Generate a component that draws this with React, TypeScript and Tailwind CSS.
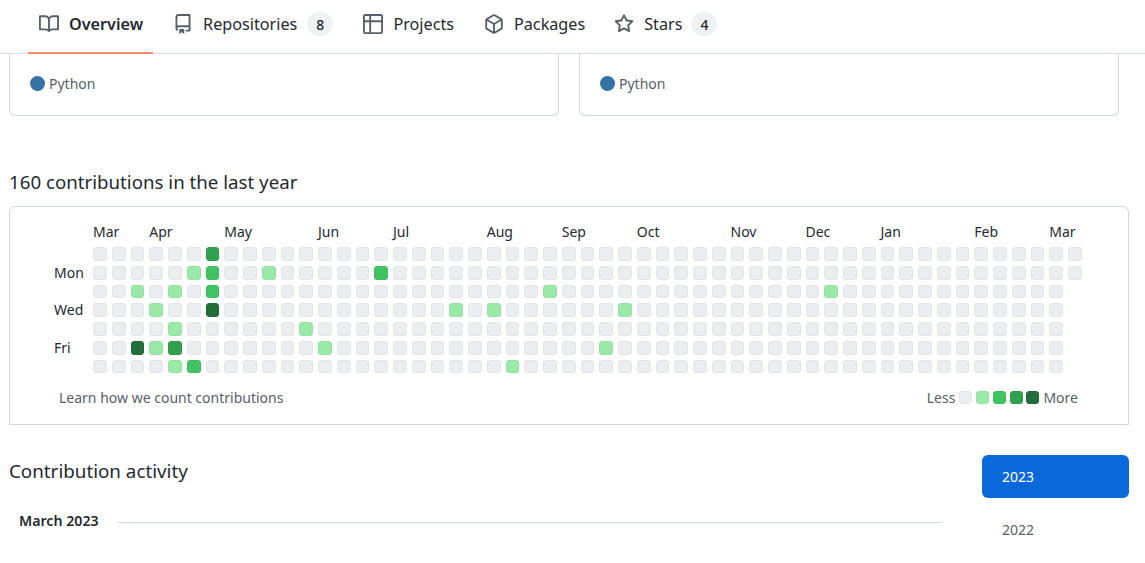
const FONT = "font-['Noto_Sans',sans-serif]";

const ICONS = {
  book: "M0 1.75A.75.75 0 0 1 .75 1h4.253c1.227 0 2.317.59 3 1.501A3.743 3.743 0 0 1 11.006 1h4.245a.75.75 0 0 1 .75.75v10.5a.75.75 0 0 1-.75.75h-4.507a2.25 2.25 0 0 0-1.591.659l-.622.621a.75.75 0 0 1-1.06 0l-.622-.621A2.25 2.25 0 0 0 5.258 13H.75a.75.75 0 0 1-.75-.75Zm7.251 10.324.004-5.073-.002-2.253A2.25 2.25 0 0 0 5.003 2.5H1.5v9h3.757a3.75 3.75 0 0 1 1.994.574ZM8.755 4.75l-.004 7.322a3.752 3.752 0 0 1 1.992-.572H14.5v-9h-3.495a2.25 2.25 0 0 0-2.25 2.25Z",
  repo: "M2 2.5A2.5 2.5 0 0 1 4.5 0h8.75a.75.75 0 0 1 .75.75v12.5a.75.75 0 0 1-.75.75h-2.5a.75.75 0 0 1 0-1.5h1.75v-2h-8a1 1 0 0 0-.714 1.7.75.75 0 1 1-1.072 1.05A2.495 2.495 0 0 1 2 11.5Zm10.5-1h-8a1 1 0 0 0-1 1v6.708A2.486 2.486 0 0 1 4.5 9h8ZM5 12.25a.25.25 0 0 1 .25-.25h3.5a.25.25 0 0 1 .25.25v3.25a.25.25 0 0 1-.4.2l-1.45-1.087a.249.249 0 0 0-.3 0L5.4 15.7a.25.25 0 0 1-.4-.2Z",
  table: "M0 1.75C0 .784.784 0 1.75 0h12.5C15.216 0 16 .784 16 1.75v12.5A1.75 1.75 0 0 1 14.25 16H1.75A1.75 1.75 0 0 1 0 14.25ZM6.5 6.5v8h7.75a.25.25 0 0 0 .25-.25V6.5Zm8-1.5V1.75a.25.25 0 0 0-.25-.25H6.5V5Zm-13 1.5v7.75c0 .138.112.25.25.25H5v-8ZM5 5V1.5H1.75a.25.25 0 0 0-.25.25V5Z",
  pkg: "m8.878.392 5.25 3.045c.54.314.872.89.872 1.514v6.098a1.75 1.75 0 0 1-.872 1.514l-5.25 3.045a1.75 1.75 0 0 1-1.756 0l-5.25-3.045A1.75 1.75 0 0 1 1 11.049V4.951c0-.624.332-1.201.872-1.514L7.122.392a1.75 1.75 0 0 1 1.756 0ZM7.875 1.69l-4.63 2.685L8 7.133l4.755-2.758-4.63-2.685a.248.248 0 0 0-.25 0ZM2.5 5.677v5.372c0 .09.047.171.125.216l4.625 2.683V8.432Zm6.25 8.271 4.625-2.683a.25.25 0 0 0 .125-.216V5.677L8.75 8.432Z",
  star: "M8 .25a.75.75 0 0 1 .673.418l1.882 3.815 4.21.612a.75.75 0 0 1 .416 1.279l-3.046 2.97.719 4.192a.751.751 0 0 1-1.088.791L8 12.347l-3.766 1.98a.75.75 0 0 1-1.088-.79l.72-4.194L.818 6.374a.75.75 0 0 1 .416-1.28l4.21-.611L7.327.668A.75.75 0 0 1 8 .25Zm0 2.445L6.615 5.5a.75.75 0 0 1-.564.41l-3.097.45 2.24 2.184a.75.75 0 0 1 .216.664l-.528 3.084 2.769-1.456a.75.75 0 0 1 .698 0l2.77 1.456-.53-3.084a.75.75 0 0 1 .216-.664l2.24-2.183-3.096-.45a.75.75 0 0 1-.564-.41L8 2.694Z",
};

const TABS = [
  { label: "Overview", icon: ICONS.book, active: true },
  { label: "Repositories", icon: ICONS.repo, count: "8" },
  { label: "Projects", icon: ICONS.table },
  { label: "Packages", icon: ICONS.pkg, tight: true },
  { label: "Stars", icon: ICONS.star, count: "4", tight: true },
];

const MONTHS = [
  { label: "Mar", cls: "col-start-1" },
  { label: "Apr", cls: "col-start-4" },
  { label: "May", cls: "col-start-8" },
  { label: "Jun", cls: "col-start-[13]" },
  { label: "Jul", cls: "col-start-[17]" },
  { label: "Aug", cls: "col-start-[22]" },
  { label: "Sep", cls: "col-start-[26]" },
  { label: "Oct", cls: "col-start-[30]" },
  { label: "Nov", cls: "col-start-[35]" },
  { label: "Dec", cls: "col-start-[39]" },
  { label: "Jan", cls: "col-start-[43]" },
  { label: "Feb", cls: "col-start-[48]" },
  { label: "Mar", cls: "col-start-[52]" },
];

const LEVELS = [
  "bg-[#ebedf0] border-[#e2e4e8]",
  "bg-[#9be9a8] border-[#93e2a1]",
  "bg-[#40c463] border-[#3dbc5e]",
  "bg-[#30a14e] border-[#2e9a4a]",
  "bg-[#216e39] border-[#1f6936]",
];

// keyed "row-col" -> level
const ACTIVITY: Record<string, number> = {
  "0-6": 3,
  "1-5": 1, "1-6": 2, "1-9": 1, "1-15": 2,
  "2-2": 1, "2-4": 1, "2-6": 2, "2-24": 1, "2-39": 1,
  "3-3": 1, "3-6": 4, "3-19": 1, "3-21": 1, "3-28": 1,
  "4-4": 1, "4-11": 1,
  "5-2": 4, "5-3": 1, "5-4": 3, "5-12": 1, "5-27": 1,
  "6-4": 1, "6-5": 2, "6-22": 1,
};

const DAYS = ["", "Mon", "", "Wed", "", "Fri", ""];

function Icon({ d, className }: { d: string; className: string }) {
  return (
    <svg viewBox="0 0 16 16" className={className} fill="currentColor">
      <path d={d} />
    </svg>
  );
}

function Counter({ value, tight }: { value: string; tight?: boolean }) {
  return (
    <span
      className={`flex h-6 w-[26px] items-center justify-center rounded-full bg-[#eff2f5] text-[14px] font-medium text-[#24292f] ${
        tight ? "-ml-px" : ""
      }`}
    >
      {value}
    </span>
  );
}

function TabNav() {
  return (
    <nav className="flex h-[54px] gap-[10px] border-b border-[#d8dee4] pl-[28px]">
      {TABS.map((tab) => (
        <div
          key={tab.label}
          className={`-mb-px flex h-[54px] items-center gap-[10px] border-b-2 pb-[4px] text-[16.2px] ${
            tab.active
              ? "border-[#fd8c73] pl-[11px] pr-[10px] font-semibold text-[#24292f]"
              : "border-transparent pl-[10px] text-[#24292f]"
          } ${!tab.active && tab.tight && !tab.count ? "pr-[9px]" : "pr-[10px]"}`}
        >
          <Icon d={tab.icon} className="h-5 w-5 text-[#57606a]" />
          <span>{tab.label}</span>
          {tab.count && <Counter value={tab.count} tight={tab.tight} />}
        </div>
      ))}
    </nav>
  );
}

function RepoCard({ className }: { className: string }) {
  return (
    <div className={`flex h-[62px] items-start rounded-b-md border border-t-0 border-[#d0d7de] pl-5 pt-[21px] ${className}`}>
      <span className="mr-[4px] mt-[1px] h-[15px] w-[15px] rounded-full bg-[#3572a5]" />
      <span className="text-[14px] leading-[18px] text-[#57606a]">Python</span>
    </div>
  );
}

function Calendar() {
  return (
    <div className="mt-[12px] h-[219px] rounded-t-md border border-[#d0d7de] pl-[44px] pr-[46px] pt-[15px]">
      <div className="flex">
        <div className="mt-[25px] flex w-[39px] flex-col gap-[5px]">
          {DAYS.map((day, i) => (
            <span key={i} className="h-[13.75px] whitespace-nowrap text-[14px] leading-[14px] text-[#24292f]">
              {day}
            </span>
          ))}
        </div>
        <div>
          <div className="grid h-[25px] grid-cols-[repeat(53,13.75px)] gap-x-[5px]">
            {MONTHS.map((m, i) => (
              <span key={i} className={`row-start-1 whitespace-nowrap text-[14px] leading-[20px] text-[#24292f] ${m.cls}`}>
                {m.label}
              </span>
            ))}
          </div>
          <div className="grid grid-flow-col grid-cols-[repeat(53,13.75px)] grid-rows-[repeat(7,13.75px)] gap-[5px]">
            {Array.from({ length: 53 }).flatMap((_, col) =>
              DAYS.map((_, row) =>
                col === 52 && row > 1 ? null : (
                  <div
                    key={`${row}-${col}`}
                    className={`rounded-[3px] border ${LEVELS[ACTIVITY[`${row}-${col}`] ?? 0]}`}
                  />
                )
              )
            )}
          </div>
        </div>
      </div>
      <div className="mt-[14px] flex items-center justify-between pl-[5px] text-[14px] text-[#57606a]">
        <span>Learn how we count contributions</span>
        <div className="flex items-center gap-[3.75px] pr-[4px]">
          <span className="mr-[0.25px]">Less</span>
          {LEVELS.map((level) => (
            <span key={level} className={`h-[13px] w-[13px] rounded-[3px] border ${level}`} />
          ))}
          <span className="ml-[0.25px]">More</span>
        </div>
      </div>
    </div>
  );
}

export default function App() {
  return (
    <div className={`h-[563px] w-[1145px] overflow-hidden bg-white ${FONT}`}>
      <TabNav />
      <div className="flex gap-5 pl-[9px]">
        <RepoCard className="w-[550px]" />
        <RepoCard className="w-[540px]" />
      </div>
      <h2 className="ml-[9px] mt-[54px] text-[18.7px] font-normal leading-[24px] text-[#24292f]">
        160 contributions in the last year
      </h2>
      <div className="ml-[9px] w-[1120px]">
        <Calendar />
      </div>
      <div className="ml-[9px] mt-[30px] flex w-[1120px] justify-between">
        <div className="w-[933px]">
          <h2 className="pt-[4px] text-[18.8px] font-normal leading-[24px] text-[#24292f]">Contribution activity</h2>
          <div className="mt-[27px] flex items-center pl-[10px]">
            <span className="mr-[19px] text-[14.2px] font-semibold text-[#24292f]">March 2023</span>
            <div className="mt-[4px] h-px flex-1 bg-[#d0d7de]" />
          </div>
        </div>
        <div className="w-[147px]">
          <div className="flex h-[43px] items-center rounded-md bg-[#0969da] pl-5 text-[14px] text-white">2023</div>
          <div className="mt-[21px] pl-5 text-[14px] text-[#57606a]">2022</div>
        </div>
      </div>
    </div>
  );
}
